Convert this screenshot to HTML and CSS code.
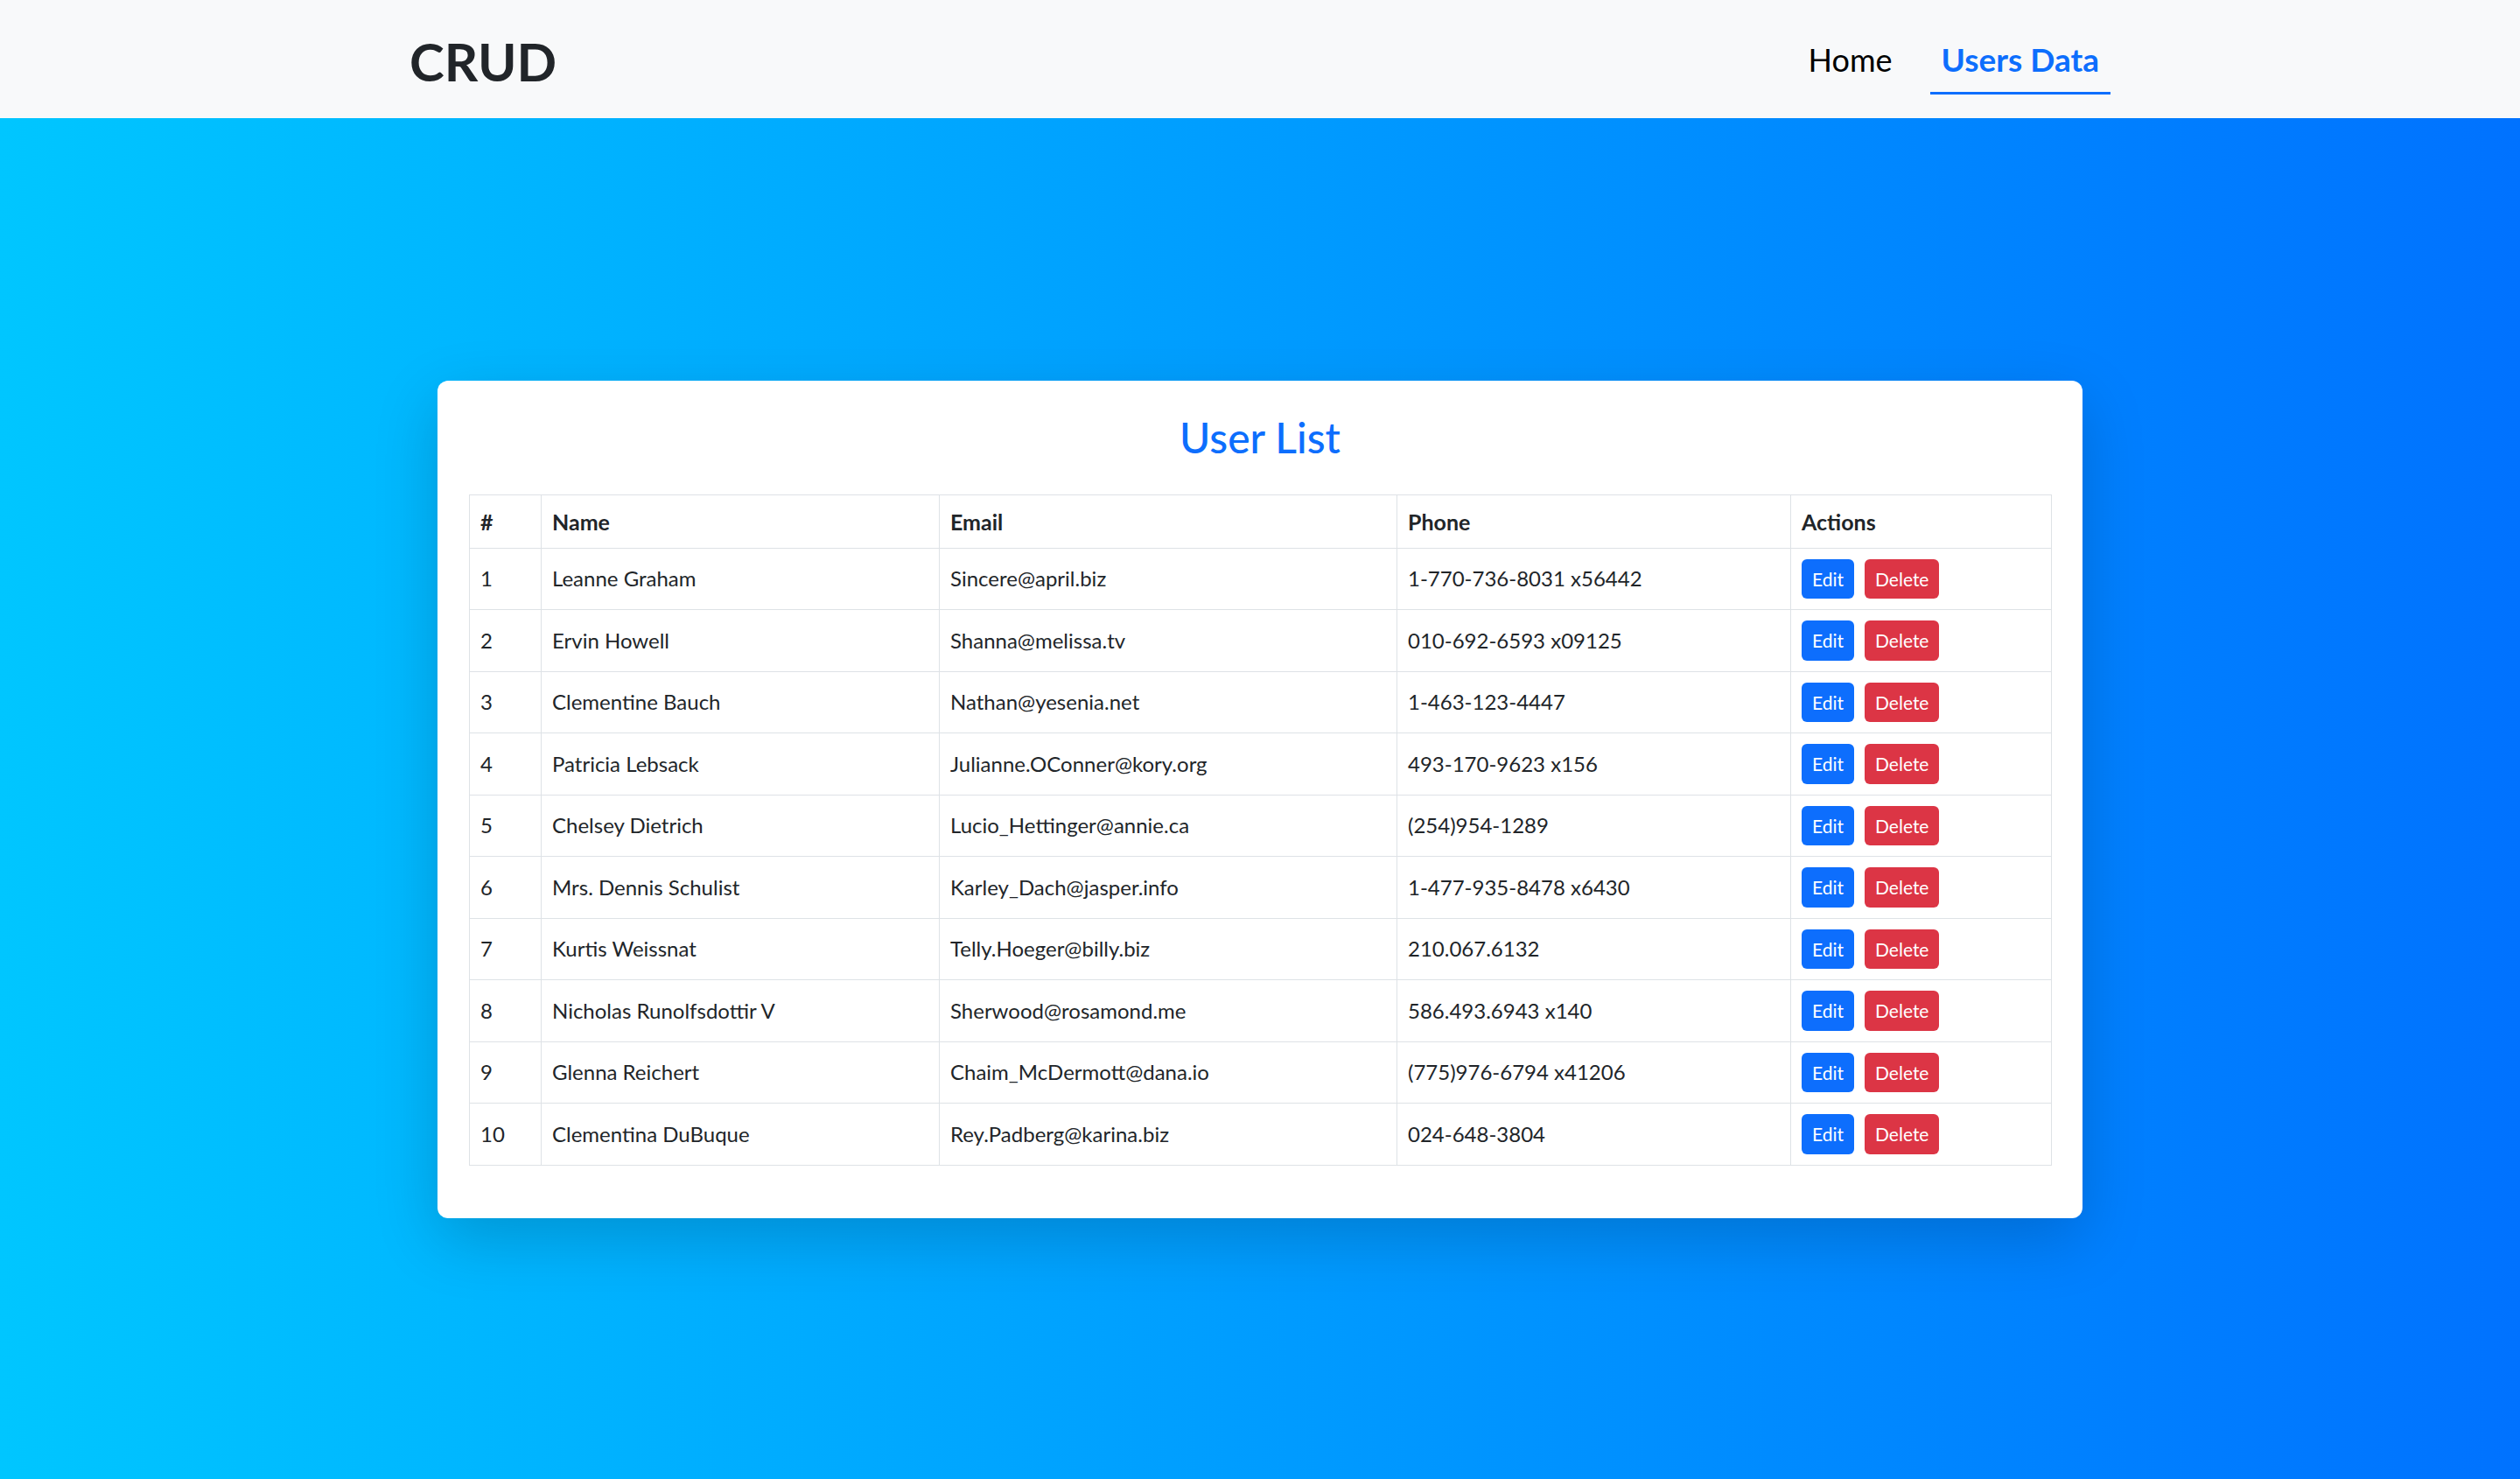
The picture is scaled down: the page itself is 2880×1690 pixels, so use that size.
FILE: index.html
```html
<!DOCTYPE html>
<html lang="en">
<head>
<meta charset="utf-8">
<title>CRUD</title>
<link rel="stylesheet" href="styles.css">
</head>
<body>
<header class="navbar">
  <div class="nav-inner">
    <a class="brand" href="#">CRUD</a>
    <ul class="nav-links">
      <li><a class="nav-link" href="#">Home</a></li>
      <li><a class="nav-link active" href="#">Users Data</a></li>
    </ul>
  </div>
</header>
<main class="main">
  <section class="card">
    <h2 class="card-title">User List</h2>
    <table class="users">
      <colgroup>
        <col class="c-id"><col class="c-name"><col class="c-email"><col class="c-phone"><col class="c-actions">
      </colgroup>
      <thead>
        <tr><th>#</th><th>Name</th><th>Email</th><th>Phone</th><th>Actions</th></tr>
      </thead>
      <tbody>
        <tr><td>1</td><td>Leanne Graham</td><td>Sincere@april.biz</td><td>1-770-736-8031 x56442</td><td><div class="actions"><button class="btn btn-edit">Edit</button><button class="btn btn-delete">Delete</button></div></td></tr>
        <tr><td>2</td><td>Ervin Howell</td><td>Shanna@melissa.tv</td><td>010-692-6593 x09125</td><td><div class="actions"><button class="btn btn-edit">Edit</button><button class="btn btn-delete">Delete</button></div></td></tr>
        <tr><td>3</td><td>Clementine Bauch</td><td>Nathan@yesenia.net</td><td>1-463-123-4447</td><td><div class="actions"><button class="btn btn-edit">Edit</button><button class="btn btn-delete">Delete</button></div></td></tr>
        <tr><td>4</td><td>Patricia Lebsack</td><td>Julianne.OConner@kory.org</td><td>493-170-9623 x156</td><td><div class="actions"><button class="btn btn-edit">Edit</button><button class="btn btn-delete">Delete</button></div></td></tr>
        <tr><td>5</td><td>Chelsey Dietrich</td><td>Lucio_Hettinger@annie.ca</td><td>(254)954-1289</td><td><div class="actions"><button class="btn btn-edit">Edit</button><button class="btn btn-delete">Delete</button></div></td></tr>
        <tr><td>6</td><td>Mrs. Dennis Schulist</td><td>Karley_Dach@jasper.info</td><td>1-477-935-8478 x6430</td><td><div class="actions"><button class="btn btn-edit">Edit</button><button class="btn btn-delete">Delete</button></div></td></tr>
        <tr><td>7</td><td>Kurtis Weissnat</td><td>Telly.Hoeger@billy.biz</td><td>210.067.6132</td><td><div class="actions"><button class="btn btn-edit">Edit</button><button class="btn btn-delete">Delete</button></div></td></tr>
        <tr><td>8</td><td>Nicholas Runolfsdottir V</td><td>Sherwood@rosamond.me</td><td>586.493.6943 x140</td><td><div class="actions"><button class="btn btn-edit">Edit</button><button class="btn btn-delete">Delete</button></div></td></tr>
        <tr><td>9</td><td>Glenna Reichert</td><td>Chaim_McDermott@dana.io</td><td>(775)976-6794 x41206</td><td><div class="actions"><button class="btn btn-edit">Edit</button><button class="btn btn-delete">Delete</button></div></td></tr>
        <tr><td>10</td><td>Clementina DuBuque</td><td>Rey.Padberg@karina.biz</td><td>024-648-3804</td><td><div class="actions"><button class="btn btn-edit">Edit</button><button class="btn btn-delete">Delete</button></div></td></tr>
      </tbody>
    </table>
  </section>
</main>
</body>
</html>
```
FILE: styles.css
```css
* { box-sizing: border-box; }

html, body {
  margin: 0;
  padding: 0;
}

body {
  font-family: Lato, "Open Sans", sans-serif;
  font-size: 24px;
  line-height: 36px;
  color: #212529;
  background: #f8f9fa;
}

.navbar {
  height: 135px;
  background: #f8f9fa;
}

.nav-inner {
  width: 1944px;
  height: 100%;
  margin: 0 auto;
  display: flex;
  justify-content: space-between;
  align-items: flex-start;
}

.brand {
  margin-top: 34px;
  font-size: 60px;
  line-height: 72px;
  font-weight: 700;
  color: #212529;
  text-decoration: none;
}

.nav-links {
  list-style: none;
  margin: 31px 0 0 0;
  padding: 0;
  display: flex;
  gap: 30px;
}

.nav-link {
  display: block;
  padding: 10px 13px;
  font-size: 36px;
  line-height: 54px;
  color: #000;
  text-decoration: none;
  border-bottom: 3px solid transparent;
}

.nav-link.active {
  color: #0d6efd;
  font-weight: 700;
  font-size: 37px;
  border-bottom-color: #0d6efd;
}

.main {
  min-height: 1555px;
  padding-top: 300px;
  background: linear-gradient(to right, #00c6ff, #0072ff);
}

.card {
  width: 1880px;
  margin: 0 auto;
  padding: 36px 36px 36px;
  background: #fff;
  border-radius: 12px;
  box-shadow: 0 24px 72px rgba(0, 0, 0, 0.175);
}

.card-title {
  margin: 0 0 36px;
  text-align: center;
  font-size: 48px;
  line-height: 57.6px;
  font-weight: 500;
  color: #0d6efd;
}

.users {
  width: 1808px;
  table-layout: fixed;
  border-collapse: collapse;
  margin-bottom: 24px;
}

.c-id { width: 82px; }
.c-name { width: 455px; }
.c-email { width: 523px; }
.c-phone { width: 450px; }
.c-actions { width: 298px; }

.users th,
.users td {
  border: 1px solid #dee2e6;
  padding: 12px 12px;
  text-align: left;
  vertical-align: middle;
  line-height: 36px;
  white-space: nowrap;
}

.users th {
  font-weight: 700;
  font-size: 25px;
}

.actions {
  display: flex;
  gap: 12px;
}

.btn {
  height: 45.5px;
  padding: 0 12px;
  border: 0;
  border-radius: 6px;
  font-family: Lato, "Open Sans", sans-serif;
  font-size: 21px;
  line-height: 45px;
  color: #fff;
  cursor: pointer;
}

.btn-edit { background: #0d6efd; }
.btn-delete { background: #dc3545; }
```
